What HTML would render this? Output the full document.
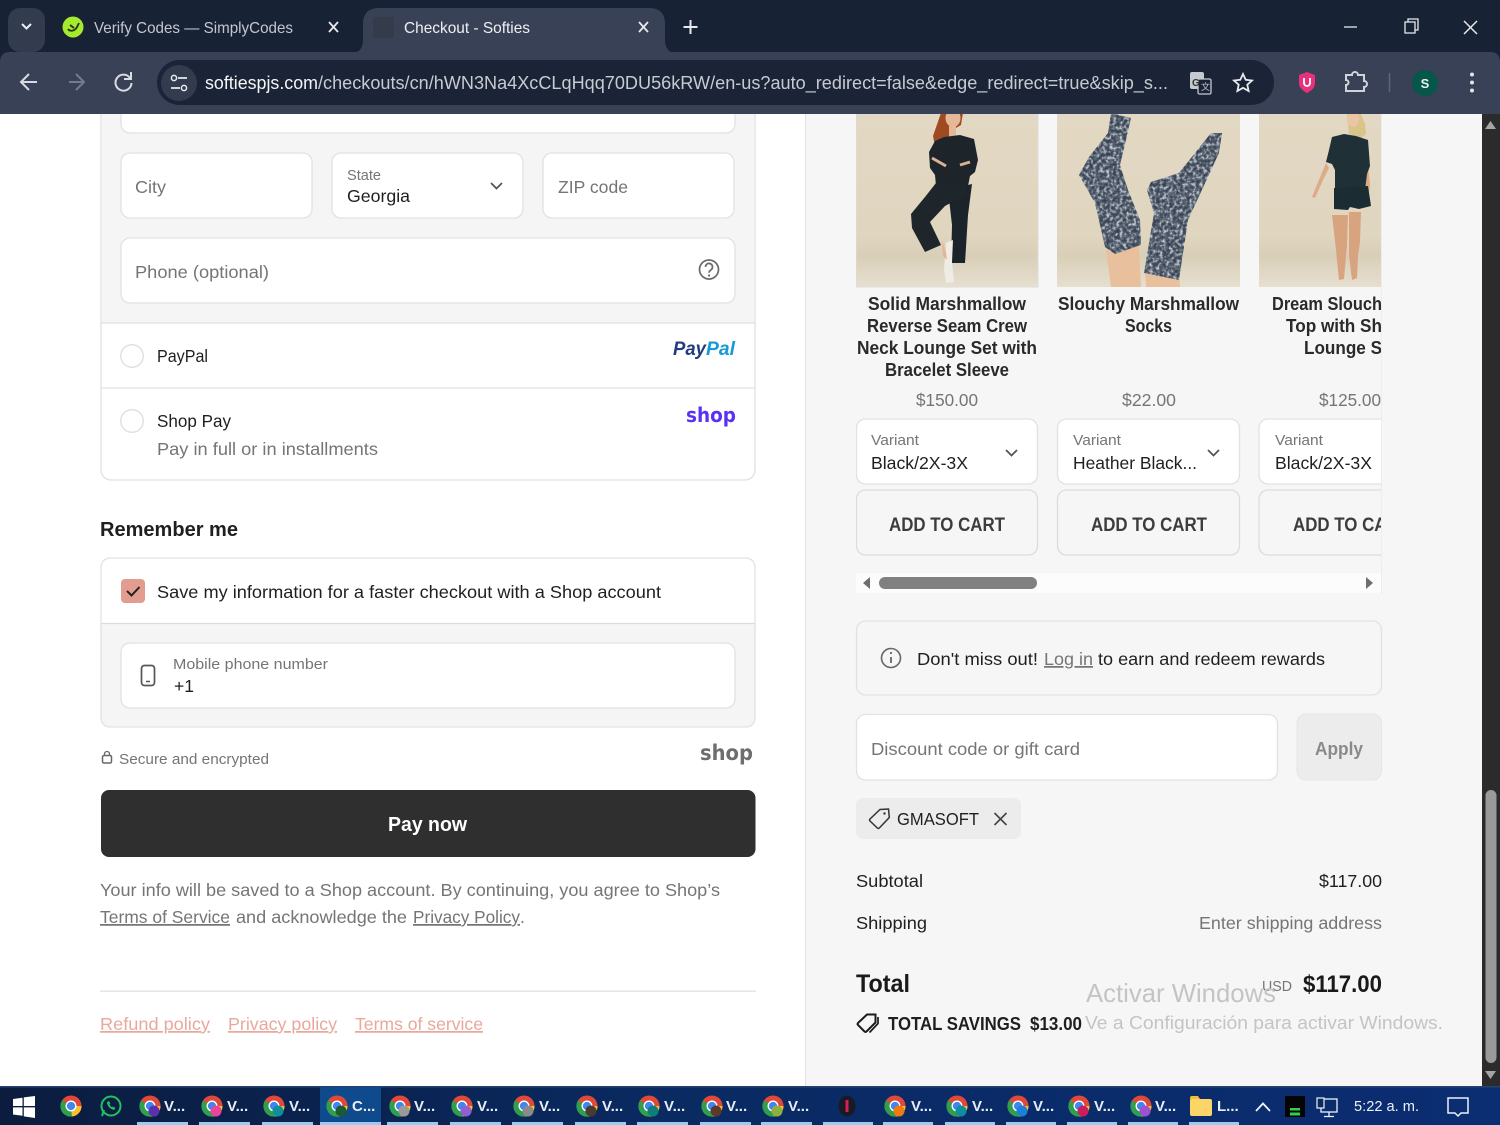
<!DOCTYPE html>
<html lang="en"><head><meta charset="utf-8"><title>Checkout - Softies</title>
<style>
html,body{margin:0;padding:0;width:1500px;height:1125px;overflow:hidden;background:#fff}
svg{display:block;position:absolute;left:0;top:0}
text{font-family:"Liberation Sans",sans-serif;white-space:pre}
.b{font-size:17.5px;fill:#1f1f1f}
.g{font-size:17.5px;fill:#757575}
.s{font-size:15px;fill:#757575}
.t{font-size:18px;font-weight:700;fill:#2a2a2a;text-anchor:start}
.c{font-size:19px;font-weight:700;fill:#3c3c3c}
.tb{font-size:15px;font-weight:700;fill:#e8eef8}
.box{fill:#fff;stroke:#e2e2e2;stroke-width:1.3}
.u{text-decoration:underline}
.lg{font-family:"DejaVu Sans",sans-serif;font-weight:700}
</style></head><body>
<svg width="1500" height="1125" viewBox="0 0 1500 1125" xmlns="http://www.w3.org/2000/svg">
<defs>
<linearGradient id="tk" x1="0" x2="1" y1="0" y2="0"><stop offset="0" stop-color="#0b1c3e"/><stop offset=".45" stop-color="#0a2a62"/><stop offset="1" stop-color="#0b2d72"/></linearGradient>
<linearGradient id="bg1" x1="0" x2="0" y1="0" y2="1"><stop offset="0" stop-color="#e2d8c3"/><stop offset=".7" stop-color="#e0d6c0"/><stop offset=".82" stop-color="#d9cfb8"/><stop offset="1" stop-color="#e6dfcf"/></linearGradient>
<filter id="knit" x="0" y="0" width="100%" height="100%" color-interpolation-filters="sRGB"><feTurbulence type="fractalNoise" baseFrequency=".3" numOctaves="2" seed="4"/><feColorMatrix values="1 0 0 0 0  1 0 0 0 0  1 0 0 0 0  0 0 0 0 1"/><feComponentTransfer><feFuncR type="table" tableValues=".2 .2 .24 .34 .62 .82 .85"/><feFuncG type="table" tableValues=".24 .24 .28 .38 .66 .85 .88"/><feFuncB type="table" tableValues=".3 .3 .34 .44 .7 .88 .9"/></feComponentTransfer><feComposite in2="SourceAlpha" operator="in"/></filter>
<symbol id="chr" viewBox="0 0 24 24"><circle cx="12" cy="12" r="11.5" fill="#e0483a"/><path d="M12 12 L2 18 A11.5 11.5 0 0 0 13.5 23.4Z" fill="#33a853"/><path d="M12 12 L2.1 6 A11.5 11.5 0 0 0 2 18 L8 23 L13.5 23.4Z" fill="#2f9e4d"/><path d="M12 12 H23.5 A11.5 11.5 0 0 1 13 23.5 Z" fill="#fbc02d"/><circle cx="12" cy="12" r="6" fill="#fff"/><circle cx="12" cy="12" r="4.5" fill="#3f86ef"/></symbol>
<clipPath id="cl"><rect x="856" y="114" width="525" height="480"/></clipPath>
<clipPath id="i1"><rect x="856" y="114" width="182" height="173"/></clipPath>
<clipPath id="i2"><rect x="1057" y="114" width="183" height="173"/></clipPath>
<clipPath id="i3"><rect x="1259" y="114" width="122" height="173"/></clipPath>
</defs>

<!-- browser chrome -->
<rect width="1500" height="114" fill="#182235"/>
<rect x="8" y="8" width="37" height="44" rx="12" fill="#333c4e"/>
<path d="M22 24l4.500 4.500 4.500-4.500" fill="none" stroke="#eceff4" stroke-width="2"/>
<circle cx="73" cy="27" r="10.500" fill="#a5ea2d"/><path d="M68 29c2 3 7 2 9-2l2-4M70 25l4 3" fill="none" stroke="#243018" stroke-width="1.800"/>
<text x="94" y="33" font-size="16" fill="#c3c7cf" textLength="199" lengthAdjust="spacingAndGlyphs">Verify Codes — SimplyCodes</text>
<path d="M329 22l9 10M338 22l-9 10" stroke="#e8eaed" stroke-width="1.800"/>
<path d="M0 114V62q0-10 10-10H1490q10 0 10 10V114Z" fill="#384155"/>
<path d="M352 53q10 0 11-12V24q0-16 16-16H649q16 0 16 16V41q1 12 11 12Z" fill="#384155"/>
<rect x="373" y="17" width="21" height="21" fill="#343c4c"/>
<text x="404" y="33" font-size="16" fill="#eef0f3" textLength="126" lengthAdjust="spacingAndGlyphs">Checkout - Softies</text>
<path d="M639 22l9 10M648 22l-9 10" stroke="#e8eaed" stroke-width="1.800"/>
<path d="M690.500 20v14M683.500 27h14" stroke="#e8eaed" stroke-width="2"/>
<path d="M1344 27h13" stroke="#e8eaed" stroke-width="1.300"/>
<path d="M1405 22v11h10V22ZM1408 22v-3h10v11h-3" fill="none" stroke="#e8eaed" stroke-width="1.300"/>
<path d="M1464 21l13 13M1477 21l-13 13" stroke="#e8eaed" stroke-width="1.500"/>
<rect x="157" y="60" width="1117" height="45" rx="22.500" fill="#1a2436"/>
<path d="M37 82H22M29 74l-8 8 8 8" fill="none" stroke="#d8dbe1" stroke-width="2"/>
<path d="M69 82H84M76 74l8 8-8 8" fill="none" stroke="#747c8b" stroke-width="2"/>
<path d="M130 78a8 8 0 1 0 1.500 5M131 72v7h-7" fill="none" stroke="#d8dbe1" stroke-width="2"/>
<circle cx="179" cy="83" r="18" fill="#333c4e"/>
<path d="M178 78h9M171 88h9" stroke="#e8eaed" stroke-width="1.700"/><circle cx="174" cy="78" r="2.600" fill="none" stroke="#e8eaed" stroke-width="1.500"/><circle cx="184" cy="88" r="2.600" fill="none" stroke="#e8eaed" stroke-width="1.500"/>
<text x="205" y="89" font-size="18.500" fill="#f4f5f7" textLength="113" lengthAdjust="spacingAndGlyphs">softiespjs.com</text>
<text x="318" y="89" font-size="18.500" fill="#c6cad1" textLength="850" lengthAdjust="spacingAndGlyphs">/checkouts/cn/hWN3Na4XcCLqHqq70DU56kRW/en-us?auto_redirect=false&amp;edge_redirect=true&amp;skip_s...</text>
<rect x="1190" y="72" width="14" height="17" rx="2" fill="#c5c9d0"/><rect x="1198" y="79" width="13" height="15" rx="1.500" fill="#1a2436" stroke="#c5c9d0" stroke-width="1.300"/>
<text x="1192" y="86" font-size="10" font-weight="700" fill="#333">G</text><text x="1201" y="90" font-size="9" fill="#c5c9d0" font-family="Noto Sans CJK SC">文</text>
<path d="M1243 74l2.700 5.800 6.300.7-4.700 4.200 1.300 6.300-5.600-3.200-5.600 3.200 1.300-6.300-4.700-4.200 6.300-.7Z" fill="none" stroke="#e8eaed" stroke-width="1.800"/>
<path d="M1307 72l8 3v8c0 5-4 8-8 10-4-2-8-5-8-10v-8Z" fill="#e8317a"/>
<path d="M1304 78v5a3 3 0 0 0 6 0v-5" fill="none" stroke="#fff" stroke-width="1.800"/>
<path d="M1346 76h6a3 3 0 0 1 6 0h6v6a3 3 0 0 1 0 6v4h-18v-6a2 2 0 0 0 0-5Z" fill="none" stroke="#d0d3d9" stroke-width="2" transform="translate(0 -1)"/>
<path d="M1389.500 73v19" stroke="#5d6678" stroke-width="1.500"/>
<circle cx="1425" cy="83" r="13" fill="#07564a"/><text x="1425" y="88" font-size="13" font-weight="700" fill="#e8f5ef" text-anchor="middle">S</text>
<circle cx="1472" cy="74.500" r="2" fill="#e0e3e8"/><circle cx="1472" cy="82.500" r="2" fill="#e0e3e8"/><circle cx="1472" cy="90.500" r="2" fill="#e0e3e8"/>

<!-- page -->
<rect x="0" y="114" width="806" height="973" fill="#fff"/>
<rect x="806" y="114" width="676" height="973" fill="#f6f6f6"/>
<rect x="805" y="114" width="1" height="973" fill="#e3e3e3"/>
<rect x="1482" y="114" width="18" height="973" fill="#2b2b2b"/>
<path d="M1485 129l5.500-8 5.500 8Z" fill="#a5a5a5"/>
<rect x="1485.500" y="790" width="11" height="273" rx="5.500" fill="#9a9a9a"/>
<path d="M1485 1071l5.500 8 5.500-8Z" fill="#a5a5a5"/>

<!-- left: address + payment -->
<path d="M101 114V470a10 10 0 0 0 10 10H745a10 10 0 0 0 10-10V114" fill="#fff" stroke="#e0e0e0" stroke-width="1.300"/>
<rect x="101.700" y="114" width="652.600" height="209" fill="#f5f5f5"/>
<path d="M101 323H755M101 388H755" stroke="#e0e0e0" stroke-width="1.300"/>
<path d="M121 114v10a9 9 0 0 0 9 9H726a9 9 0 0 0 9-9V114" class="box"/>
<rect x="121" y="153" width="191" height="65" rx="9" class="box"/>
<rect x="332" y="153" width="191" height="65" rx="9" class="box"/>
<rect x="543" y="153" width="191" height="65" rx="9" class="box"/>
<rect x="121" y="238" width="614" height="65" rx="9" class="box"/>
<text x="135" y="193" class="g" textLength="31" lengthAdjust="spacingAndGlyphs">City</text>
<text x="347" y="180" class="s" textLength="34" lengthAdjust="spacingAndGlyphs">State</text>
<text x="347" y="202" class="b" textLength="63" lengthAdjust="spacingAndGlyphs">Georgia</text>
<path d="M491 183l5.500 5.500 5.500-5.500" fill="none" stroke="#555" stroke-width="1.800"/>
<text x="558" y="193" class="g" textLength="70" lengthAdjust="spacingAndGlyphs">ZIP code</text>
<text x="135" y="278" class="g" textLength="134" lengthAdjust="spacingAndGlyphs">Phone (optional)</text>
<circle cx="709" cy="269.500" r="9.500" fill="none" stroke="#6a6a6a" stroke-width="1.700"/>
<path d="M705.500 267a3.500 3.500 0 1 1 5.500 2.800c-1.300.9-2 1.500-2 3" fill="none" stroke="#6a6a6a" stroke-width="1.700"/><circle cx="709" cy="275.500" r="1.100" fill="#6a6a6a"/>
<circle cx="132" cy="356" r="11.300" fill="#fff" stroke="#dedede" stroke-width="1.300"/>
<text x="157" y="362" class="b" textLength="51" lengthAdjust="spacingAndGlyphs">PayPal</text>
<text x="673" y="355" font-size="19" font-weight="700" font-style="italic" fill="#253b80" textLength="33" lengthAdjust="spacingAndGlyphs">Pay</text>
<text x="706" y="355" font-size="19" font-weight="700" font-style="italic" fill="#179bd7" textLength="29" lengthAdjust="spacingAndGlyphs">Pal</text>
<circle cx="132" cy="421" r="11.300" fill="#fff" stroke="#dedede" stroke-width="1.300"/>
<text x="157" y="427" class="b" textLength="74" lengthAdjust="spacingAndGlyphs">Shop Pay</text>
<text x="157" y="455" class="g" textLength="221" lengthAdjust="spacingAndGlyphs">Pay in full or in installments</text>
<text x="686" y="422" font-size="20" class="lg" fill="#5a31f4" textLength="50" lengthAdjust="spacingAndGlyphs">shop</text>

<!-- remember me -->
<text x="100" y="536" font-size="20.500" font-weight="700" fill="#1f1f1f" textLength="138" lengthAdjust="spacingAndGlyphs">Remember me</text>
<rect x="101" y="558" width="654" height="169" rx="9" fill="#f5f5f5" stroke="#e2e2e2" stroke-width="1.300"/>
<path d="M101.700 623V567a9 9 0 0 1 9-8.300H745.300a9 9 0 0 1 9 8.300V623Z" fill="#fff"/>
<path d="M101 623.500H755" stroke="#dcdcdc" stroke-width="1.300"/>
<rect x="121" y="579" width="24" height="24" rx="4" fill="#e39c90"/>
<path d="M127 591l4.500 4.500 8-8.500" fill="none" stroke="#1f1f1f" stroke-width="2"/>
<text x="157" y="598" class="b" textLength="504" lengthAdjust="spacingAndGlyphs">Save my information for a faster checkout with a Shop account</text>
<rect x="121" y="643" width="614" height="65" rx="9" class="box"/>
<rect x="141.500" y="665.500" width="13" height="20" rx="3" fill="none" stroke="#555" stroke-width="1.700"/><path d="M146 681.500h4" stroke="#555" stroke-width="1.500"/>
<text x="173" y="669" class="s" textLength="155" lengthAdjust="spacingAndGlyphs">Mobile phone number</text>
<text x="174" y="692" class="b" textLength="20" lengthAdjust="spacingAndGlyphs">+1</text>
<rect x="102.500" y="755.500" width="9" height="7.500" rx="1.500" fill="none" stroke="#666" stroke-width="1.500"/><path d="M104.500 755.500v-1.500a2.500 2.500 0 0 1 5 0v1.500" fill="none" stroke="#666" stroke-width="1.300"/>
<text x="119" y="764" class="s" textLength="150" lengthAdjust="spacingAndGlyphs">Secure and encrypted</text>
<text x="700" y="760" font-size="21" class="lg" fill="#6e6e6e" textLength="53" lengthAdjust="spacingAndGlyphs">shop</text>
<rect x="101" y="790" width="654.500" height="67" rx="8" fill="#2f2f2f"/>
<text x="388" y="831" font-size="20" font-weight="700" fill="#fff" textLength="79" lengthAdjust="spacingAndGlyphs">Pay now</text>
<text x="100" y="896" class="g" textLength="620" lengthAdjust="spacingAndGlyphs">Your info will be saved to a Shop account. By continuing, you agree to Shop’s</text>
<text x="100" y="923" class="g u" textLength="130" lengthAdjust="spacingAndGlyphs">Terms of Service</text>
<text x="236" y="923" class="g" textLength="171" lengthAdjust="spacingAndGlyphs">and acknowledge the</text>
<text x="413" y="923" class="g u" textLength="107" lengthAdjust="spacingAndGlyphs">Privacy Policy</text>
<text x="520" y="923" class="g">.</text>
<rect x="100" y="990.500" width="656" height="1.300" fill="#e0e0e0"/>
<text x="100" y="1030" font-size="17.500" fill="#e8a89c" class="u" textLength="110" lengthAdjust="spacingAndGlyphs">Refund policy</text>
<text x="228" y="1030" font-size="17.500" fill="#e8a89c" class="u" textLength="109" lengthAdjust="spacingAndGlyphs">Privacy policy</text>
<text x="355" y="1030" font-size="17.500" fill="#e8a89c" class="u" textLength="128" lengthAdjust="spacingAndGlyphs">Terms of service</text>

<!-- products -->
<g clip-path="url(#cl)">
<rect x="856" y="114" width="182" height="173" fill="url(#bg1)" stroke="#dcdcdc"/>
<rect x="1057" y="114" width="183" height="173" fill="url(#bg1)"/>
<rect x="1259" y="114" width="130" height="173" fill="url(#bg1)"/>

<g clip-path="url(#i1)">
<path d="M941 113H963L961 125 951 131 950 146 945 156 936 151 933 136Z" fill="#a04a22"/>
<ellipse cx="953" cy="118" rx="7.500" ry="9" fill="#e6b898"/>
<path d="M949 126h7v11h-7Z" fill="#e6b898"/>
<path d="M948 190 972 184 968 215 965 263H951L952 225Z" fill="#1c242b"/>
<path d="M936 183H968L965 195 945 206 930 222 941 245 925 252 912 228 911 214 925 197Z" fill="#1e262c"/>
<path d="M944 137 960 135 974 139 978 160 975 172 970 176 968 186H936L935 175 930 168 929 152 935 141Z" fill="#1d252b"/>
<path d="M932 158l14 8M960 165l10-3" stroke="#d9b294" stroke-width="3" fill="none"/>
<path d="M946 243 953 240 952 262 954 282 946 283 944 270Z" fill="#efece5"/>
<path d="M942 240l4 12 1 8-4-4Z" fill="#e2b694"/>
</g>

<g clip-path="url(#i2)">
<path d="M1106 250l33-4 2 41h-30Z" fill="#e9c09d"/>
<path d="M1145 270l34 4 1 13h-34Z" fill="#e9c09d"/>
<path d="M1111 113 1131 118 1126 140 1120 165 1128 190 1140 220 1141 245 1115 254 1105 247 1095 203 1079 175 1089 157 1108 133Z" fill="#5f6c79" filter="url(#knit)"/>
<path d="M1222 133 1211 133 1179 173 1151 182 1147 190 1154 213 1144 273 1179 280 1188 220 1219 153Z" fill="#556371" filter="url(#knit)"/>
</g>

<g clip-path="url(#i3)">
<path d="M1347 114h14l4 10 1 10-5 4-12-4Z" fill="#d9c58a"/>
<ellipse cx="1353" cy="119" rx="6" ry="8" fill="#ecc5a6"/>
<path d="M1332 215h16l-1 30-3 34-5 1-3-30ZM1349 212h12l-1 30-2 14-1 22-5 2-3-24Z" fill="#d8a37f"/>
<path d="M1326 163l-10 24-4 10 3 1 9-20 5-10ZM1368 165l2 20-2 14-3-1-1-14Z" fill="#dcab88"/>
<path d="M1332 137l12-3 12 2 12 4 2 26-3 8-2 16-30-2 0-18-3-6-6-2 3-12Z" fill="#1f3137"/>
<path d="M1334 188l34-2 3 20-12 3-9-2-2 3-14-1Z" fill="#1b2c32"/>
</g>

<!-- titles -->
<text x="868" y="310" class="t" textLength="158" lengthAdjust="spacingAndGlyphs">Solid Marshmallow</text>
<text x="867" y="332" class="t" textLength="160" lengthAdjust="spacingAndGlyphs">Reverse Seam Crew</text>
<text x="857" y="354" class="t" textLength="180" lengthAdjust="spacingAndGlyphs">Neck Lounge Set with</text>
<text x="885" y="376" class="t" textLength="124" lengthAdjust="spacingAndGlyphs">Bracelet Sleeve</text>
<text x="1058" y="310" class="t" textLength="181" lengthAdjust="spacingAndGlyphs">Slouchy Marshmallow</text>
<text x="1125" y="332" class="t" textLength="47" lengthAdjust="spacingAndGlyphs">Socks</text>
<text x="1272" y="310" class="t" textLength="110" lengthAdjust="spacingAndGlyphs">Dream Slouch</text>
<text x="1286" y="332" class="t" textLength="96" lengthAdjust="spacingAndGlyphs">Top with Sh</text>
<text x="1304" y="354" class="t" textLength="78" lengthAdjust="spacingAndGlyphs">Lounge S</text>
<text x="916" y="406" class="g" textLength="62" lengthAdjust="spacingAndGlyphs">$150.00</text>
<text x="1122" y="406" class="g" textLength="54" lengthAdjust="spacingAndGlyphs">$22.00</text>
<text x="1319" y="406" class="g" textLength="62" lengthAdjust="spacingAndGlyphs">$125.00</text>

<rect x="856.500" y="419" width="181" height="65" rx="9" class="box"/>
<rect x="1057.500" y="419" width="182" height="65" rx="9" class="box"/>
<rect x="1259" y="419" width="140" height="65" rx="9" class="box"/>
<text x="871" y="445" class="s" textLength="48" lengthAdjust="spacingAndGlyphs">Variant</text>
<text x="871" y="469" class="b" textLength="97" lengthAdjust="spacingAndGlyphs">Black/2X-3X</text>
<path d="M1006 450l5.500 5.500 5.500-5.500" fill="none" stroke="#555" stroke-width="1.800"/>
<text x="1073" y="445" class="s" textLength="48" lengthAdjust="spacingAndGlyphs">Variant</text>
<text x="1073" y="469" class="b" textLength="124" lengthAdjust="spacingAndGlyphs">Heather Black...</text>
<path d="M1208 450l5.500 5.500 5.500-5.500" fill="none" stroke="#555" stroke-width="1.800"/>
<text x="1275" y="445" class="s" textLength="48" lengthAdjust="spacingAndGlyphs">Variant</text>
<text x="1275" y="469" class="b" textLength="97" lengthAdjust="spacingAndGlyphs">Black/2X-3X</text>

<rect x="856.500" y="490" width="181" height="65" rx="9" fill="none" stroke="#dcdcdc" stroke-width="1.300"/>
<rect x="1057.500" y="490" width="182" height="65" rx="9" fill="none" stroke="#dcdcdc" stroke-width="1.300"/>
<rect x="1259" y="490" width="140" height="65" rx="9" fill="none" stroke="#dcdcdc" stroke-width="1.300"/>
<text x="889" y="531" class="c" textLength="116" lengthAdjust="spacingAndGlyphs">ADD TO CART</text>
<text x="1091" y="531" class="c" textLength="116" lengthAdjust="spacingAndGlyphs">ADD TO CART</text>
<text x="1293" y="531" class="c" textLength="116" lengthAdjust="spacingAndGlyphs">ADD TO CART</text>

<rect x="856" y="573" width="525" height="20" fill="#fcfcfc"/>
<path d="M870 577v12l-7-6Z" fill="#6e6e6e"/>
<rect x="879" y="577" width="158" height="12" rx="6" fill="#808080"/>
<path d="M1366 577v12l7-6Z" fill="#6e6e6e"/>
</g>
<rect x="1381" y="114" width="1" height="480" fill="#ededed"/>

<!-- rewards -->
<rect x="856.500" y="621" width="525" height="74" rx="9" fill="none" stroke="#e2e2e2" stroke-width="1.300"/>
<circle cx="891" cy="658" r="9.500" fill="none" stroke="#666" stroke-width="1.600"/><path d="M891 657v6" stroke="#666" stroke-width="1.800"/><circle cx="891" cy="653" r="1.100" fill="#666"/>
<text x="917" y="665" class="b" textLength="121" lengthAdjust="spacingAndGlyphs">Don't miss out!</text>
<text x="1044" y="665" class="g u" textLength="49" lengthAdjust="spacingAndGlyphs">Log in</text>
<text x="1098" y="665" class="b" textLength="227" lengthAdjust="spacingAndGlyphs">to earn and redeem rewards</text>

<!-- discount -->
<rect x="856.500" y="714.500" width="421" height="65.500" rx="9" class="box"/>
<text x="871" y="755" class="g" textLength="209" lengthAdjust="spacingAndGlyphs">Discount code or gift card</text>
<rect x="1297" y="714" width="84.500" height="66" rx="9" fill="#ececec" stroke="#e5e5e5"/>
<text x="1315" y="755" font-size="18" font-weight="700" fill="#8a8a8a" textLength="48" lengthAdjust="spacingAndGlyphs">Apply</text>
<rect x="856" y="798" width="165" height="41" rx="7" fill="#ececec"/>
<path d="M870 819l10-9.500 8.500-.5.800 8.500-10 10.500a1.500 1.500 0 0 1-2 0l-7.300-7a1.500 1.500 0 0 1 0-2Z" fill="none" stroke="#333" stroke-width="1.500"/><circle cx="884.500" cy="813.500" r="1.200" fill="#333"/>
<text x="897" y="825" class="b" textLength="82" lengthAdjust="spacingAndGlyphs">GMASOFT</text>
<path d="M994.500 813l12 12M1006.500 813l-12 12" stroke="#444" stroke-width="1.600"/>

<!-- totals -->
<text x="856" y="887" class="b" textLength="67" lengthAdjust="spacingAndGlyphs">Subtotal</text>
<text x="1319" y="887" class="b" textLength="63" lengthAdjust="spacingAndGlyphs">$117.00</text>
<text x="856" y="929" class="b" textLength="71" lengthAdjust="spacingAndGlyphs">Shipping</text>
<text x="1199" y="929" class="g" textLength="183" lengthAdjust="spacingAndGlyphs">Enter shipping address</text>
<text x="856" y="992" font-size="25" font-weight="700" fill="#1a1a1a" textLength="54" lengthAdjust="spacingAndGlyphs">Total</text>
<text x="1262" y="991" font-size="15" fill="#757575" textLength="30" lengthAdjust="spacingAndGlyphs">USD</text>
<text x="1303" y="992" font-size="24" font-weight="700" fill="#1a1a1a" textLength="79" lengthAdjust="spacingAndGlyphs">$117.00</text>
<path d="M858 1023l9-8.500h8.500v8l-9 9a1.500 1.500 0 0 1-2 0l-6.500-6.500a1.500 1.500 0 0 1 0-2Z" fill="none" stroke="#1a1a1a" stroke-width="2"/><path d="M878 1017v6.500l-8.500 9" fill="none" stroke="#1a1a1a" stroke-width="1.700"/>
<text x="888" y="1030" font-size="18" font-weight="700" fill="#1f1f1f" textLength="133" lengthAdjust="spacingAndGlyphs">TOTAL SAVINGS</text>
<text x="1030" y="1030" font-size="18" font-weight="700" fill="#1f1f1f" textLength="52" lengthAdjust="spacingAndGlyphs">$13.00</text>
<text x="1086" y="1002" font-size="26" fill="#c4c4c4" textLength="190" lengthAdjust="spacingAndGlyphs">Activar Windows</text>
<text x="1085" y="1029" font-size="18.500" fill="#c4c4c4" textLength="358" lengthAdjust="spacingAndGlyphs">Ve a Configuración para activar Windows.</text>

<!-- taskbar -->
<rect x="0" y="1087" width="1500" height="38" fill="url(#tk)"/>
<rect x="0" y="1086" width="1500" height="1.500" fill="#29436f"/>
<rect x="320" y="1087" width="61" height="38" fill="#0e4a8c"/>
<path d="M13 1099l9.500-1.300v8.300H13ZM23.800 1097.400 35 1096v10H23.800ZM13 1107.400h9.500v8.300L13 1114.500ZM23.800 1107.400H35V1118l-11.200-1.600Z" fill="#fff"/>
<use href="#chr" x="60" y="1095" width="22" height="22"/>
<circle cx="111" cy="1106" r="9.500" fill="none" stroke="#25c05f" stroke-width="2"/><path d="M102 1116l2-6" stroke="#25c05f" stroke-width="2"/><path d="M107 1102c0 4 3 7 7 8l1.500-2-2.500-1.500-1 .7c-1-.5-2-1.500-2.500-2.700l.8-1-1.300-2.500Z" fill="#25c05f"/>

<g>
<use href="#chr" x="139" y="1095" width="22" height="22"/><circle cx="154" cy="1111" r="5.500" fill="#5b2fb0"/><text x="164" y="1111" class="tb">V...</text><rect x="137" y="1122" width="51" height="3" fill="#9ccbf2"/>
<use href="#chr" x="201" y="1095" width="22" height="22"/><circle cx="216" cy="1111" r="5.500" fill="#e8449a"/><text x="227" y="1111" class="tb">V...</text><rect x="199" y="1122" width="51" height="3" fill="#9ccbf2"/>
<use href="#chr" x="263" y="1095" width="22" height="22"/><circle cx="278" cy="1111" r="5.500" fill="#0f8f9c"/><text x="289" y="1111" class="tb">V...</text><rect x="262" y="1122" width="51" height="3" fill="#9ccbf2"/>
<use href="#chr" x="326" y="1095" width="22" height="22"/><circle cx="341" cy="1111" r="5.500" fill="#1c5a34"/><text x="352" y="1111" class="tb">C...</text><rect x="320" y="1122" width="61" height="3" fill="#9ccbf2"/>
<use href="#chr" x="389" y="1095" width="22" height="22"/><circle cx="404" cy="1111" r="5.500" fill="#9a9a9a"/><text x="414" y="1111" class="tb">V...</text><rect x="387" y="1122" width="51" height="3" fill="#9ccbf2"/>
<use href="#chr" x="451" y="1095" width="22" height="22"/><circle cx="466" cy="1111" r="5.500" fill="#9060d0"/><text x="477" y="1111" class="tb">V...</text><rect x="450" y="1122" width="51" height="3" fill="#9ccbf2"/>
<use href="#chr" x="513" y="1095" width="22" height="22"/><circle cx="528" cy="1111" r="5.500" fill="#8a8a8a"/><text x="539" y="1111" class="tb">V...</text><rect x="512" y="1122" width="51" height="3" fill="#9ccbf2"/>
<use href="#chr" x="576" y="1095" width="22" height="22"/><circle cx="591" cy="1111" r="5.500" fill="#4a3a30"/><text x="602" y="1111" class="tb">V...</text><rect x="575" y="1122" width="51" height="3" fill="#9ccbf2"/>
<use href="#chr" x="638" y="1095" width="22" height="22"/><circle cx="653" cy="1111" r="5.500" fill="#0d7f78"/><text x="664" y="1111" class="tb">V...</text><rect x="637" y="1122" width="51" height="3" fill="#9ccbf2"/>
<use href="#chr" x="701" y="1095" width="22" height="22"/><circle cx="716" cy="1111" r="5.500" fill="#5a3a2a"/><text x="726" y="1111" class="tb">V...</text><rect x="700" y="1122" width="51" height="3" fill="#9ccbf2"/>
<use href="#chr" x="762" y="1095" width="22" height="22"/><circle cx="777" cy="1111" r="5.500" fill="#8fb040"/><text x="788" y="1111" class="tb">V...</text><rect x="761" y="1122" width="51" height="3" fill="#9ccbf2"/>
<ellipse cx="847" cy="1106" rx="8.500" ry="10.500" fill="#1a1a22"/><rect x="845.500" y="1100" width="3" height="12" fill="#d02060"/><rect x="823" y="1122" width="50" height="3" fill="#9ccbf2"/>
<use href="#chr" x="884" y="1095" width="22" height="22"/><circle cx="899" cy="1111" r="5.500" fill="#f07a10"/><text x="911" y="1111" class="tb">V...</text><rect x="883" y="1122" width="50" height="3" fill="#9ccbf2"/>
<use href="#chr" x="946" y="1095" width="22" height="22"/><circle cx="961" cy="1111" r="5.500" fill="#0f8f9c"/><text x="972" y="1111" class="tb">V...</text><rect x="945" y="1122" width="50" height="3" fill="#9ccbf2"/>
<use href="#chr" x="1007" y="1095" width="22" height="22"/><circle cx="1022" cy="1111" r="5.500" fill="#1c80d8"/><text x="1033" y="1111" class="tb">V...</text><rect x="1006" y="1122" width="50" height="3" fill="#9ccbf2"/>
<use href="#chr" x="1068" y="1095" width="22" height="22"/><circle cx="1083" cy="1111" r="5.500" fill="#c81e60"/><text x="1094" y="1111" class="tb">V...</text><rect x="1067" y="1122" width="50" height="3" fill="#9ccbf2"/>
<use href="#chr" x="1130" y="1095" width="22" height="22"/><circle cx="1145" cy="1111" r="5.500" fill="#a050d0"/><text x="1155" y="1111" class="tb">V...</text><rect x="1128" y="1122" width="50" height="3" fill="#9ccbf2"/>
<rect x="1190" y="1099" width="22" height="17" rx="2" fill="#fbd568"/><path d="M1190 1101v-3a2 2 0 0 1 2-2h6l2 3h-8Z" fill="#f0bf40"/><text x="1217" y="1111" class="tb">L...</text><rect x="1189" y="1122" width="50" height="3" fill="#9ccbf2"/>
</g>
<path d="M1256 1111l7-7.500 7 7.500" fill="none" stroke="#eef2f8" stroke-width="1.800"/>
<rect x="1285" y="1096" width="20" height="21" fill="#050505"/><rect x="1290" y="1108" width="10" height="2.500" fill="#35d04a"/><rect x="1290" y="1112.500" width="10" height="3" fill="#35d04a"/>
<rect x="1321" y="1099" width="16" height="13" fill="none" stroke="#eef2f8" stroke-width="1.300"/><rect x="1317" y="1098" width="7" height="10" fill="#0a2a62" stroke="#eef2f8" stroke-width="1.200"/><path d="M1329 1112v4M1324 1116.500h10" stroke="#eef2f8" stroke-width="1.300"/>
<text x="1354" y="1111" font-size="15" fill="#eef2f8" textLength="65" lengthAdjust="spacingAndGlyphs">5:22 a. m.</text>
<path d="M1448 1098h20v15h-7l-3 3-3-3h-7Z" fill="none" stroke="#eef2f8" stroke-width="1.500"/>
</svg>
</body></html>
